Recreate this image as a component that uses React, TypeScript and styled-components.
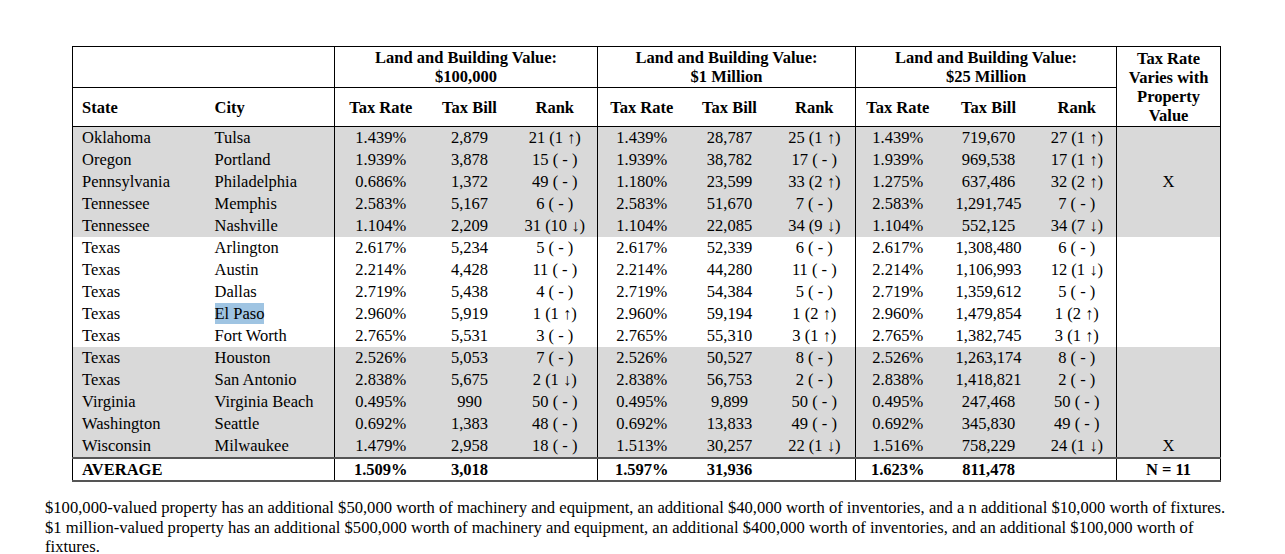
import React from "react";
import styled, { createGlobalStyle } from "styled-components";

const GlobalStyle = createGlobalStyle`
  html, body {
    margin: 0;
    padding: 0;
    background: #fff;
  }
  body {
    font-family: "Liberation Serif", "DejaVu Serif", serif;
    color: #000;
  }
`;

// colgroup widths, measured off the reference
const widths = [133, 129, 92, 86, 85, 88, 88, 82, 84, 98, 79, 104];

const groups = ["$100,000", "$1 Million", "$25 Million"];

const rows: string[][] = [
  ["Oklahoma", "Tulsa", "1.439%", "2,879", "21 (1 ↑)", "1.439%", "28,787", "25 (1 ↑)", "1.439%", "719,670", "27 (1 ↑)", ""],
  ["Oregon", "Portland", "1.939%", "3,878", "15 ( - )", "1.939%", "38,782", "17 ( - )", "1.939%", "969,538", "17 (1 ↑)", ""],
  ["Pennsylvania", "Philadelphia", "0.686%", "1,372", "49 ( - )", "1.180%", "23,599", "33 (2 ↑)", "1.275%", "637,486", "32 (2 ↑)", "X"],
  ["Tennessee", "Memphis", "2.583%", "5,167", "6 ( - )", "2.583%", "51,670", "7 ( - )", "2.583%", "1,291,745", "7 ( - )", ""],
  ["Tennessee", "Nashville", "1.104%", "2,209", "31 (10 ↓)", "1.104%", "22,085", "34 (9 ↓)", "1.104%", "552,125", "34 (7 ↓)", ""],
  ["Texas", "Arlington", "2.617%", "5,234", "5 ( - )", "2.617%", "52,339", "6 ( - )", "2.617%", "1,308,480", "6 ( - )", ""],
  ["Texas", "Austin", "2.214%", "4,428", "11 ( - )", "2.214%", "44,280", "11 ( - )", "2.214%", "1,106,993", "12 (1 ↓)", ""],
  ["Texas", "Dallas", "2.719%", "5,438", "4 ( - )", "2.719%", "54,384", "5 ( - )", "2.719%", "1,359,612", "5 ( - )", ""],
  ["Texas", "El Paso", "2.960%", "5,919", "1 (1 ↑)", "2.960%", "59,194", "1 (2 ↑)", "2.960%", "1,479,854", "1 (2 ↑)", ""],
  ["Texas", "Fort Worth", "2.765%", "5,531", "3 ( - )", "2.765%", "55,310", "3 (1 ↑)", "2.765%", "1,382,745", "3 (1 ↑)", ""],
  ["Texas", "Houston", "2.526%", "5,053", "7 ( - )", "2.526%", "50,527", "8 ( - )", "2.526%", "1,263,174", "8 ( - )", ""],
  ["Texas", "San Antonio", "2.838%", "5,675", "2 (1 ↓)", "2.838%", "56,753", "2 ( - )", "2.838%", "1,418,821", "2 ( - )", ""],
  ["Virginia", "Virginia Beach", "0.495%", "990", "50 ( - )", "0.495%", "9,899", "50 ( - )", "0.495%", "247,468", "50 ( - )", ""],
  ["Washington", "Seattle", "0.692%", "1,383", "48 ( - )", "0.692%", "13,833", "49 ( - )", "0.692%", "345,830", "49 ( - )", ""],
  ["Wisconsin", "Milwaukee", "1.479%", "2,958", "18 ( - )", "1.513%", "30,257", "22 (1 ↓)", "1.516%", "758,229", "24 (1 ↓)", "X"],
];

// first col of each group gets the vertical rule
const dividerCols = [2, 5, 8, 11];

const Page = styled.div`
  padding-top: 46px;
  display: flex;
  flex-direction: column;
`;

const TableWrap = styled.div`
  margin-left: 72px;
`;

const Table = styled.table`
  border-collapse: collapse;
  table-layout: fixed;
  width: 1148px;
  font-size: 16.5px;
  border: 1px solid #000;
`;

const HeadCell = styled.th<{ $left?: boolean; $divider?: boolean; $h?: number }>`
  font-weight: 700;
  line-height: 19px;
  height: ${(p) => p.$h ?? 38}px;
  padding: 0 ${(p) => (p.$left ? "9px" : "0")};
  text-align: ${(p) => (p.$left ? "left" : "center")};
  vertical-align: middle;
  border-left: ${(p) => (p.$divider ? "1px solid #000" : "none")};
  white-space: nowrap;
`;

const GroupRow = styled.tr`
  border-bottom: 1px solid #000;
`;

const SubRow = styled.tr`
  border-bottom: 1px solid #000;
`;

const Row = styled.tr<{ $shaded: boolean }>`
  background: ${(p) => (p.$shaded ? "#d9d9d9" : "#fff")};
`;

const Cell = styled.td<{ $left?: boolean; $divider?: boolean }>`
  height: 22px;
  padding: 0 ${(p) => (p.$left ? "9px" : "0")};
  line-height: 22px;
  text-align: ${(p) => (p.$left ? "left" : "center")};
  border-left: ${(p) => (p.$divider ? "1px solid #000" : "none")};
  white-space: nowrap;
`;

const AvgRow = styled.tr`
  border-top: 2px solid #555;
  border-bottom: 2px solid #555;
  background: #fff;
`;

const AvgCell = styled(Cell)`
  font-weight: 700;
  height: 21px;
  line-height: 20px;
`;

const Selected = styled.span`
  background: #9fc4e2;
  padding: 1px 0;
`;

const Footer = styled.div`
  margin: 16px 0 0 45px;
  width: 1188px;
  font-size: 16.6px;
  line-height: 19.5px;
`;

const Note = styled.p`
  margin: 0;
`;

export default function App() {
  return (
    <>
      <GlobalStyle />
      <Page>
        <TableWrap>
          <Table>
            <colgroup>
              {widths.map((w, i) => (
                <col key={i} style={{ width: w }} />
              ))}
            </colgroup>
            <thead>
              <GroupRow>
                <HeadCell colSpan={2} $h={40} />
                {groups.map((g) => (
                  <HeadCell key={g} colSpan={3} $divider $h={40}>
                    Land and Building Value:
                    <br />
                    {g}
                  </HeadCell>
                ))}
                <HeadCell rowSpan={2} $divider>
                  Tax Rate
                  <br />
                  Varies with
                  <br />
                  Property
                  <br />
                  Value
                </HeadCell>
              </GroupRow>
              <SubRow>
                <HeadCell $left>State</HeadCell>
                <HeadCell $left>City</HeadCell>
                {groups.map((g) => (
                  <React.Fragment key={g}>
                    <HeadCell $divider>Tax Rate</HeadCell>
                    <HeadCell>Tax Bill</HeadCell>
                    <HeadCell>Rank</HeadCell>
                  </React.Fragment>
                ))}
              </SubRow>
            </thead>
            <tbody>
              {rows.map((r, ri) => (
                <Row key={ri} $shaded={ri < 5 || ri >= 10}>
                  {r.map((v, ci) => (
                    <Cell key={ci} $left={ci < 2} $divider={dividerCols.includes(ci)}>
                      {v === "El Paso" ? <Selected>{v}</Selected> : v}
                    </Cell>
                  ))}
                </Row>
              ))}
              <AvgRow>
                <AvgCell $left colSpan={2}>AVERAGE</AvgCell>
                <AvgCell $divider>1.509%</AvgCell>
                <AvgCell>3,018</AvgCell>
                <AvgCell />
                <AvgCell $divider>1.597%</AvgCell>
                <AvgCell>31,936</AvgCell>
                <AvgCell />
                <AvgCell $divider>1.623%</AvgCell>
                <AvgCell>811,478</AvgCell>
                <AvgCell />
                <AvgCell $divider>N = 11</AvgCell>
              </AvgRow>
            </tbody>
          </Table>
        </TableWrap>
        <Footer>
          <Note>
            $100,000-valued property has an additional $50,000 worth of machinery and equipment, an additional
            $40,000 worth of inventories, and a n additional $10,000 worth of fixtures.
          </Note>
          <Note>
            $1 million-valued property has an additional $500,000 worth of machinery and equipment, an additional
            $400,000 worth of inventories, and an additional $100,000 worth of fixtures.
          </Note>
        </Footer>
      </Page>
    </>
  );
}
